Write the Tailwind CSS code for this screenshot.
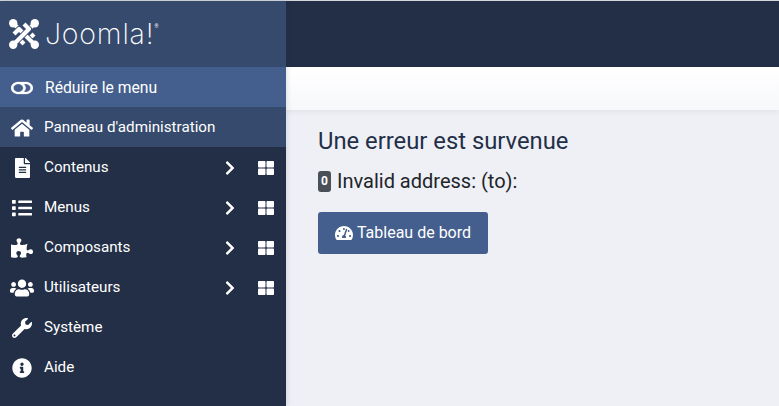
<!DOCTYPE html>
<html lang="fr">
  <head>
    <meta charset="UTF-8" />
    <script src="https://cdn.jsdelivr.net/npm/@tailwindcss/browser@4"></script>
    <title>Joomla - Erreur</title>
  </head>
  <body class="w-[779px] h-[406px] overflow-hidden font-['Roboto',sans-serif] bg-[#eef0f6]">
    <div class="h-px bg-[#d5d7da]"></div>
    <div class="flex h-[405px]">
      <!-- sidebar -->
      <aside class="relative z-10 w-[286px] shrink-0 bg-[#232f47] text-white text-[15.2px] shadow-[1px_0_5px_rgba(35,47,71,0.15)]">
        <div class="h-[66px] bg-[#364a6d] flex items-center pl-[9px] gap-[6px]">
          <svg class="w-[30px] h-[30px]" viewBox="0 0 30 30" fill="none" stroke-linejoin="round">
            <path d="M5 5 L20 20 L25 15" stroke="#364a6d" stroke-width="6" />
            <path d="M5 5 L20 20 L25 15" stroke="#fff" stroke-width="4.2" />
            <path d="M25 5 L10 20 L15 25" stroke="#364a6d" stroke-width="6" />
            <path d="M25 5 L10 20 L15 25" stroke="#fff" stroke-width="4.2" />
            <path d="M25 25 L10 10 L5 15" stroke="#364a6d" stroke-width="6" />
            <path d="M25 25 L10 10 L5 15" stroke="#fff" stroke-width="4.2" />
            <path d="M5 25 L20 10 L15 5" stroke="#364a6d" stroke-width="6" />
            <path d="M5 25 L20 10 L15 5" stroke="#fff" stroke-width="4.2" />
            <g fill="#fff">
              <circle cx="4.2" cy="4.2" r="4.2" />
              <circle cx="25.8" cy="4.2" r="4.2" />
              <circle cx="25.8" cy="25.8" r="4.2" />
              <circle cx="4.2" cy="25.8" r="4.2" />
            </g>
          </svg>
          <span class="text-[28.5px] leading-none font-['Inter',sans-serif] font-extralight tracking-[0.8px]">Joomla!</span>
          <span class="text-[5px] -ml-[6px] -mt-[14px]">®</span>
        </div>
        <a class="h-10 bg-[#445f8e] flex items-center pt-px">
          <span class="w-[44px] flex justify-center">
            <svg class="w-[22px] h-[16px]" viewBox="0 0 576 512" preserveAspectRatio="none" fill="currentColor" stroke="currentColor" stroke-width="8"><path d="M384 64H192C86 64 0 150 0 256s86 192 192 192h192c106 0 192-86 192-192S490 64 384 64zM64 256c0-70.7 57.3-128 128-128s128 57.3 128 128-57.3 128-128 128S64 326.7 64 256zm320 128h-48.9c65.2-72.8 65.2-183.1 0-256H384c70.7 0 128 57.3 128 128s-57.3 128-128 128z"/></svg>
          </span>
          <span class="pl-[1px] text-[15.7px]">Réduire le menu</span>
        </a>
        <a class="h-10 bg-[#364a6d] flex items-center pt-px">
          <span class="w-[44px] flex justify-center">
            <svg class="w-[22px] h-[20px]" viewBox="0 0 576 512" fill="currentColor"><path d="M280.37 148.26L96 300.11V464a16 16 0 0 0 16 16l112.06-.29a16 16 0 0 0 15.92-16V368a16 16 0 0 1 16-16h64a16 16 0 0 1 16 16v95.64a16 16 0 0 0 16 16.05L464 480a16 16 0 0 0 16-16V300L295.67 148.26a12.19 12.19 0 0 0-15.3 0zM571.6 251.47L488 182.56V44.05a12 12 0 0 0-12-12h-56a12 12 0 0 0-12 12v72.61L318.47 43a48 48 0 0 0-61 0L4.34 251.47a12 12 0 0 0-1.6 16.9l25.5 31A12 12 0 0 0 45.15 301l235.22-193.74a12.19 12.19 0 0 1 15.3 0L530.9 301a12 12 0 0 0 16.9-1.6l25.5-31a12 12 0 0 0-1.7-16.93z"/></svg>
          </span>
          <span>Panneau d'administration</span>
        </a>
        <a class="h-10 flex items-center pt-px">
          <span class="w-[44px] flex justify-center">
            <svg class="w-[15px] h-5" viewBox="0 0 384 512" fill="currentColor"><path d="M224 136V0H24C10.7 0 0 10.7 0 24v464c0 13.3 10.7 24 24 24h336c13.3 0 24-10.7 24-24V160H248c-13.2 0-24-10.8-24-24zm64 236c0 6.6-5.4 12-12 12H108c-6.6 0-12-5.4-12-12v-8c0-6.6 5.4-12 12-12h168c6.6 0 12 5.4 12 12v8zm0-64c0 6.6-5.4 12-12 12H108c-6.6 0-12-5.4-12-12v-8c0-6.6 5.4-12 12-12h168c6.6 0 12 5.4 12 12v8zm0-72v8c0 6.6-5.4 12-12 12H108c-6.6 0-12-5.4-12-12v-8c0-6.6 5.4-12 12-12h168c6.6 0 12 5.4 12 12zm96-114.1v6.1H256V0h6.1c6.4 0 12.5 2.5 17 7l97.9 98c4.5 4.5 7 10.6 7 16.9z"/></svg>
          </span>
          <span class="flex-1">Contenus</span>
          <svg class="w-[10px] h-4 mr-[23px]" viewBox="0 0 320 512" fill="currentColor"><path d="M285.476 272.971L91.132 467.314c-9.373 9.373-24.569 9.373-33.941 0l-22.667-22.667c-9.357-9.357-9.375-24.522-.04-33.901L188.505 256 34.484 101.255c-9.335-9.379-9.317-24.544.04-33.901l22.667-22.667c9.373-9.373 24.569-9.373 33.941 0L285.475 239.03c9.373 9.372 9.373 24.568.001 33.941z"/></svg>
          <svg class="w-4 h-4 mr-3" viewBox="0 0 512 512" fill="currentColor"><path d="M296 32h192c13.255 0 24 10.745 24 24v160c0 13.255-10.745 24-24 24H296c-13.255 0-24-10.745-24-24V56c0-13.255 10.745-24 24-24zm-80 0H24C10.745 32 0 42.745 0 56v160c0 13.255 10.745 24 24 24h192c13.255 0 24-10.745 24-24V56c0-13.255-10.745-24-24-24zM0 296v160c0 13.255 10.745 24 24 24h192c13.255 0 24-10.745 24-24V296c0-13.255-10.745-24-24-24H24c-13.255 0-24 10.745-24 24zm296 184h192c13.255 0 24-10.745 24-24V296c0-13.255-10.745-24-24-24H296c-13.255 0-24 10.745-24 24v160c0 13.255 10.745 24 24 24z"/></svg>
        </a>
        <a class="h-10 flex items-center pt-px">
          <span class="w-[44px] flex justify-center">
            <svg class="w-5 h-5" viewBox="0 0 512 512" fill="currentColor"><path d="M80 368H16a16 16 0 0 0-16 16v64a16 16 0 0 0 16 16h64a16 16 0 0 0 16-16v-64a16 16 0 0 0-16-16zm0-320H16A16 16 0 0 0 0 64v64a16 16 0 0 0 16 16h64a16 16 0 0 0 16-16V64a16 16 0 0 0-16-16zm0 160H16a16 16 0 0 0-16 16v64a16 16 0 0 0 16 16h64a16 16 0 0 0 16-16v-64a16 16 0 0 0-16-16zm416 176H176a16 16 0 0 0-16 16v32a16 16 0 0 0 16 16h320a16 16 0 0 0 16-16v-32a16 16 0 0 0-16-16zm0-320H176a16 16 0 0 0-16 16v32a16 16 0 0 0 16 16h320a16 16 0 0 0 16-16V80a16 16 0 0 0-16-16zm0 160H176a16 16 0 0 0-16 16v32a16 16 0 0 0 16 16h320a16 16 0 0 0 16-16v-32a16 16 0 0 0-16-16z"/></svg>
          </span>
          <span class="flex-1">Menus</span>
          <svg class="w-[10px] h-4 mr-[23px]" viewBox="0 0 320 512" fill="currentColor"><path d="M285.476 272.971L91.132 467.314c-9.373 9.373-24.569 9.373-33.941 0l-22.667-22.667c-9.357-9.357-9.375-24.522-.04-33.901L188.505 256 34.484 101.255c-9.335-9.379-9.317-24.544.04-33.901l22.667-22.667c9.373-9.373 24.569-9.373 33.941 0L285.475 239.03c9.373 9.372 9.373 24.568.001 33.941z"/></svg>
          <svg class="w-4 h-4 mr-3" viewBox="0 0 512 512" fill="currentColor"><path d="M296 32h192c13.255 0 24 10.745 24 24v160c0 13.255-10.745 24-24 24H296c-13.255 0-24-10.745-24-24V56c0-13.255 10.745-24 24-24zm-80 0H24C10.745 32 0 42.745 0 56v160c0 13.255 10.745 24 24 24h192c13.255 0 24-10.745 24-24V56c0-13.255-10.745-24-24-24zM0 296v160c0 13.255 10.745 24 24 24h192c13.255 0 24-10.745 24-24V296c0-13.255-10.745-24-24-24H24c-13.255 0-24 10.745-24 24zm296 184h192c13.255 0 24-10.745 24-24V296c0-13.255-10.745-24-24-24H296c-13.255 0-24 10.745-24 24v160c0 13.255 10.745 24 24 24z"/></svg>
        </a>
        <a class="h-10 flex items-center pt-px">
          <span class="w-[44px] flex justify-center">
            <svg class="w-[22px] h-5" viewBox="0 0 576 512" fill="currentColor"><path d="M519.442 288.651c-41.519 0-59.5 31.593-82.058 31.593C377.409 320.244 432 144 432 144s-196.288 80-196.288-3.297c0-35.827 36.288-46.25 36.288-85.985C272 19.216 243.885 0 210.539 0c-34.654 0-66.366 18.891-66.366 56.346 0 41.364 31.711 59.277 31.711 81.75C175.885 207.719 0 166.758 0 166.758v333.237s178.635 41.047 178.635-28.662c0-22.473-40-40.107-40-81.471 0-37.456 29.25-56.346 63.577-56.346 33.673 0 61.788 19.216 61.788 54.717 0 39.735-36.288 50.158-36.288 85.985 0 60.803 129.675 25.73 181.23 25.73 0 0-34.725-120.101 25.827-120.101 35.962 0 46.423 36.152 86.308 36.152C556.712 416 576 387.99 576 354.443c0-34.199-18.962-65.792-56.558-65.792z"/></svg>
          </span>
          <span class="flex-1">Composants</span>
          <svg class="w-[10px] h-4 mr-[23px]" viewBox="0 0 320 512" fill="currentColor"><path d="M285.476 272.971L91.132 467.314c-9.373 9.373-24.569 9.373-33.941 0l-22.667-22.667c-9.357-9.357-9.375-24.522-.04-33.901L188.505 256 34.484 101.255c-9.335-9.379-9.317-24.544.04-33.901l22.667-22.667c9.373-9.373 24.569-9.373 33.941 0L285.475 239.03c9.373 9.372 9.373 24.568.001 33.941z"/></svg>
          <svg class="w-4 h-4 mr-3" viewBox="0 0 512 512" fill="currentColor"><path d="M296 32h192c13.255 0 24 10.745 24 24v160c0 13.255-10.745 24-24 24H296c-13.255 0-24-10.745-24-24V56c0-13.255 10.745-24 24-24zm-80 0H24C10.745 32 0 42.745 0 56v160c0 13.255 10.745 24 24 24h192c13.255 0 24-10.745 24-24V56c0-13.255-10.745-24-24-24zM0 296v160c0 13.255 10.745 24 24 24h192c13.255 0 24-10.745 24-24V296c0-13.255-10.745-24-24-24H24c-13.255 0-24 10.745-24 24zm296 184h192c13.255 0 24-10.745 24-24V296c0-13.255-10.745-24-24-24H296c-13.255 0-24 10.745-24 24v160c0 13.255 10.745 24 24 24z"/></svg>
        </a>
        <a class="h-10 flex items-center pt-px">
          <span class="w-[44px] flex justify-center">
            <svg class="w-[24px] h-5" viewBox="0 0 640 512" fill="currentColor"><path d="M96 224c35.3 0 64-28.7 64-64s-28.7-64-64-64-64 28.7-64 64 28.7 64 64 64zm448 0c35.3 0 64-28.7 64-64s-28.7-64-64-64-64 28.7-64 64 28.7 64 64 64zm32 32h-64c-17.6 0-33.5 7.1-45.1 18.6 40.3 22.1 68.9 62 75.1 109.4h66c17.7 0 32-14.3 32-32v-32c0-35.3-28.7-64-64-64zm-256 0c61.9 0 112-50.1 112-112S381.9 32 320 32 208 82.1 208 144s50.1 112 112 112zm76.8 32h-8.3c-20.8 10-43.9 16-68.5 16s-47.6-6-68.5-16h-8.3C179.6 288 128 339.6 128 403.2V432c0 26.5 21.5 48 48 48h288c26.5 0 48-21.5 48-48v-28.8c0-63.6-51.6-115.2-115.2-115.2zm-223.7-13.4C161.5 263.1 145.6 256 128 256H64c-35.3 0-64 28.7-64 64v32c0 17.7 14.3 32 32 32h65.9c6.3-47.4 34.9-87.3 75.2-109.4z"/></svg>
          </span>
          <span class="flex-1">Utilisateurs</span>
          <svg class="w-[10px] h-4 mr-[23px]" viewBox="0 0 320 512" fill="currentColor"><path d="M285.476 272.971L91.132 467.314c-9.373 9.373-24.569 9.373-33.941 0l-22.667-22.667c-9.357-9.357-9.375-24.522-.04-33.901L188.505 256 34.484 101.255c-9.335-9.379-9.317-24.544.04-33.901l22.667-22.667c9.373-9.373 24.569-9.373 33.941 0L285.475 239.03c9.373 9.372 9.373 24.568.001 33.941z"/></svg>
          <svg class="w-4 h-4 mr-3" viewBox="0 0 512 512" fill="currentColor"><path d="M296 32h192c13.255 0 24 10.745 24 24v160c0 13.255-10.745 24-24 24H296c-13.255 0-24-10.745-24-24V56c0-13.255 10.745-24 24-24zm-80 0H24C10.745 32 0 42.745 0 56v160c0 13.255 10.745 24 24 24h192c13.255 0 24-10.745 24-24V56c0-13.255-10.745-24-24-24zM0 296v160c0 13.255 10.745 24 24 24h192c13.255 0 24-10.745 24-24V296c0-13.255-10.745-24-24-24H24c-13.255 0-24 10.745-24 24zm296 184h192c13.255 0 24-10.745 24-24V296c0-13.255-10.745-24-24-24H296c-13.255 0-24 10.745-24 24v160c0 13.255 10.745 24 24 24z"/></svg>
        </a>
        <a class="h-10 flex items-center pt-px">
          <span class="w-[44px] flex justify-center">
            <svg class="w-5 h-5" viewBox="0 0 512 512" fill="currentColor"><path d="M507.73 109.1c-2.24-9.03-13.54-12.09-20.12-5.51l-74.36 74.36-67.88-11.31-11.31-67.88 74.36-74.36c6.62-6.62 3.43-17.9-5.66-20.16-47.38-11.74-99.55.91-136.58 37.93-39.64 39.64-50.55 97.1-34.05 147.2L18.74 402.76c-24.99 24.99-24.99 65.51 0 90.5 24.99 24.99 65.51 24.99 90.5 0l213.21-213.21c50.12 16.71 107.47 5.68 147.37-34.22 37.07-37.07 49.7-89.32 37.91-136.73zM64 472c-13.25 0-24-10.75-24-24 0-13.26 10.75-24 24-24s24 10.74 24 24c0 13.25-10.75 24-24 24z"/></svg>
          </span>
          <span>Système</span>
        </a>
        <a class="h-10 flex items-center pt-px">
          <span class="w-[44px] flex justify-center">
            <svg class="w-5 h-5" viewBox="0 0 512 512" fill="currentColor"><path d="M256 8C119.043 8 8 119.083 8 256c0 136.997 111.043 248 248 248s248-111.003 248-248C504 119.083 392.957 8 256 8zm0 110c23.196 0 42 18.804 42 42s-18.804 42-42 42-42-18.804-42-42 18.804-42 42-42zm56 254c0 6.627-5.373 12-12 12h-88c-6.627 0-12-5.373-12-12v-24c0-6.627 5.373-12 12-12h12v-64h-12c-6.627 0-12-5.373-12-12v-24c0-6.627 5.373-12 12-12h64c6.627 0 12 5.373 12 12v100h12c6.627 0 12 5.373 12 12v24z"/></svg>
          </span>
          <span>Aide</span>
        </a>
      </aside>
      <!-- main -->
      <main class="flex-1 flex flex-col">
        <div class="h-[66px] bg-[#232f47]"></div>
        <div class="h-[43px] bg-gradient-to-b from-white to-[#f7f8fb] shadow-[0_1px_6px_rgba(0,0,0,0.08)]"></div>
        <div class="pl-[32px] pt-[16px] text-[#232f47]">
          <h1 class="text-[23.8px] leading-[30px]">Une erreur est survenue</h1>
          <p class="mt-[12px] text-[20px] leading-[27px] flex items-center gap-[6px] text-[#212529]">
            <span class="bg-[#495057] text-white text-[12px] font-bold rounded-[3px] w-[13px] h-[21px] flex items-center justify-center">0</span>
            Invalid address: (to):
          </p>
          <button class="mt-[17px] h-[42px] w-[170px] rounded-[3px] bg-[#445f8e] text-white text-[16px] flex items-center justify-center gap-[4px]">
            <svg class="w-[18px] h-4" viewBox="0 0 576 512" fill="currentColor"><path d="M288 32C128.94 32 0 160.94 0 320c0 52.8 14.25 102.26 39.06 144.8 5.61 9.62 16.3 15.2 27.44 15.2h443c11.14 0 21.83-5.58 27.44-15.2C561.75 422.26 576 372.8 576 320c0-159.06-128.94-288-288-288zm0 64c14.71 0 26.58 10.13 30.32 23.65-1.11 2.26-2.64 4.23-3.45 6.67l-9.22 27.67c-5.13 3.49-10.97 6.01-17.64 6.01-17.67 0-32-14.33-32-32S270.33 96 288 96zM96 384c-17.67 0-32-14.33-32-32s14.33-32 32-32 32 14.33 32 32-14.33 32-32 32zm48-160c-17.67 0-32-14.33-32-32s14.33-32 32-32 32 14.33 32 32-14.33 32-32 32zm246.77-72.41l-61.33 184C343.13 347.33 352 364.54 352 384c0 11.72-3.38 22.55-8.88 32H232.88c-5.5-9.45-8.88-20.28-8.88-32 0-33.94 26.5-61.43 59.9-63.59l61.34-184.01c4.17-12.56 17.73-19.45 30.36-15.17 12.57 4.19 19.35 17.79 15.17 30.36zm14.66 57.2l15.52-46.55c3.47-1.29 7.13-2.23 11.05-2.23 17.67 0 32 14.33 32 32s-14.33 32-32 32c-11.38-.01-20.89-6.28-26.57-15.22zM480 384c-17.67 0-32-14.33-32-32s14.33-32 32-32 32 14.33 32 32-14.33 32-32 32z"/></svg>
            Tableau de bord
          </button>
        </div>
      </main>
    </div>
  </body>
</html>
